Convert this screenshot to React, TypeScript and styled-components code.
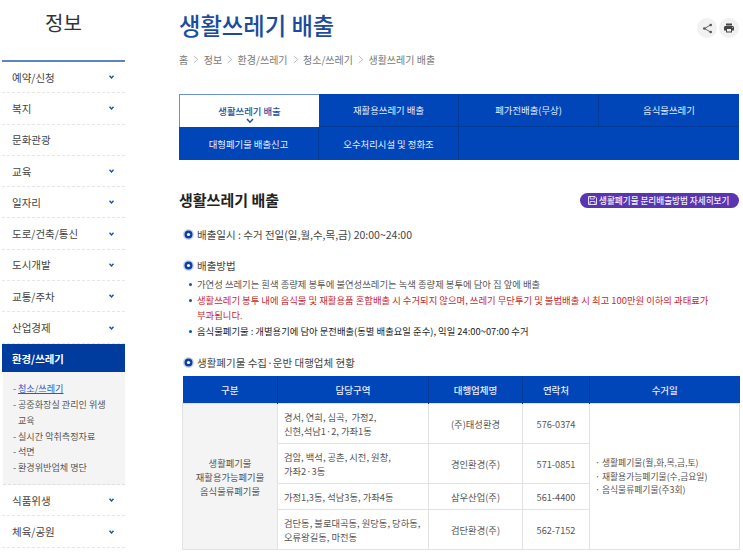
import React from "react";
import styled, { createGlobalStyle } from "styled-components";

const GlobalStyle = createGlobalStyle`
  html, body {
    margin: 0;
    padding: 0;
    height: 554px;
    overflow: hidden;
    background: #ffffff;
    font-family: "Noto Sans CJK KR", "Noto Sans", sans-serif;
    color: #444444;
  }
`;

const Page = styled.div`
  display: flex;
  align-items: flex-start;
  width: 743px;
  box-sizing: border-box;
  padding-left: 2px;
`;

const Sidebar = styled.aside`
  width: 123px;
  flex-shrink: 0;
  margin-right: 54px;
`;

const SideTitle = styled.h2`
  margin: 0;
  height: 62px;
  box-sizing: border-box;
  padding-top: 6px;
  font-size: 20px;
  line-height: 34px;
  font-weight: 400;
  text-align: center;
  color: #333333;
  border-bottom: 2px solid #5e82c4;
`;

const SideItem = styled.div`
  display: flex;
  align-items: center;
  justify-content: space-between;
  height: 31.3px;
  box-sizing: border-box;
  padding: 0 11px 0 10px;
  font-size: 10.5px;
  color: #444444;
  border-bottom: 1px dashed #e6e6e6;
`;

const SideActive = styled.div`
  display: flex;
  align-items: center;
  height: 28px;
  margin-top: 0.5px;
  padding: 0 10px;
  font-size: 10.4px;
  font-weight: 700;
  color: #ffffff;
  background: #003c9e;
`;

const SubPanel = styled.ul`
  list-style: none;
  margin: 0 0 0 1px;
  padding: 9px 17px 10px 10px;
  height: 113px;
  box-sizing: border-box;
  background: #f4f4f4;
  border-bottom: 1px dashed #e0e0e0;
`;

const SubItem = styled.li<{ $current?: boolean }>`
  position: relative;
  padding-left: 5px;
  font-size: 9.1px;
  line-height: 15.8px;
  color: ${(p) => (p.$current ? "#2a56c6" : "#555555")};
  text-decoration: ${(p) => (p.$current ? "underline" : "none")};
  &::before {
    content: "-";
    position: absolute;
    left: 0;
    color: #555555;
  }
`;

const Main = styled.main`
  width: 560px;
  flex-shrink: 0;
`;

const TopRow = styled.div`
  display: flex;
  align-items: flex-start;
  justify-content: space-between;
  height: 51px;
`;

const PageTitle = styled.h1`
  margin: 0;
  padding-top: 6px;
  font-size: 23.3px;
  line-height: 38px;
  font-weight: 500;
  color: #1b4c9c;
`;

const ToolGroup = styled.div`
  display: flex;
  gap: 2px;
  margin-top: 18px;
`;

const ToolButton = styled.span`
  display: flex;
  align-items: center;
  justify-content: center;
  width: 20px;
  height: 20px;
  border-radius: 50%;
  background: #f1f1f1;
`;

const Crumbs = styled.nav`
  display: flex;
  align-items: center;
  height: 16px;
  font-size: 10px;
  color: #777777;
`;

const CrumbSep = styled.svg`
  width: 15.5px;
  height: 9px;
  flex-shrink: 0;
`;

const Tabs = styled.div`
  display: grid;
  grid-template-columns: repeat(4, 140px);
  grid-auto-rows: 33px;
  margin-top: 27px;
  background: #0046b8;
`;

const Tab = styled.div<{ $active?: boolean; $row: number; $plain?: boolean }>`
  position: relative;
  display: flex;
  align-items: center;
  justify-content: center;
  box-sizing: border-box;
  font-size: 9.4px;
  color: ${(p) => (p.$active ? "#1d4f9e" : "#e8eefb")};
  font-weight: ${(p) => (p.$active ? 500 : 400)};
  background: ${(p) => (p.$active ? "#ffffff" : "#0046b8")};
  border: ${(p) => (p.$active ? "1px solid #6b8fd6" : "none")};
  border-bottom: ${(p) =>
    p.$active ? "none" : p.$row === 0 ? "1px solid #053a98" : "none"};
  border-right: ${(p) =>
    p.$active || p.$plain ? "none" : "1px solid #053a98"};
`;

const TabCaret = styled.svg`
  position: absolute;
  left: 66px;
  bottom: 3px;
  width: 8px;
  height: 6px;
`;

const SectionHead = styled.div`
  display: flex;
  align-items: center;
  justify-content: space-between;
  margin-top: 30px;
  height: 20px;
`;

const SectionTitle = styled.h3`
  margin: 0;
  font-size: 15px;
  line-height: 20px;
  font-weight: 700;
  color: #222222;
`;

const PurpleButton = styled.span`
  display: flex;
  align-items: center;
  gap: 2px;
  width: 159px;
  height: 15px;
  box-sizing: border-box;
  padding-left: 8px;
  border-radius: 8px;
  background: #5a35b0;
  font-size: 8.6px;
  font-weight: 500;
  color: #f2effa;
  white-space: nowrap;
`;

const Bullet = styled.div<{ $gap: number }>`
  display: flex;
  align-items: center;
  gap: 3px;
  height: 16px;
  margin-top: ${(p) => p.$gap}px;
  margin-left: 4px;
  font-size: 10.5px;
  color: #444444;
`;

const DotList = styled.ul`
  list-style: none;
  margin: 4px 0 0 0;
  padding: 0 20px 0 18px;
`;

const Dot = styled.li<{ $tone?: "red" | "dark" }>`
  position: relative;
  font-size: 9.35px;
  line-height: 15.5px;
  color: ${(p) =>
    p.$tone === "red" ? "#c8282e" : p.$tone === "dark" ? "#222222" : "#555555"};
  &::before {
    content: "";
    position: absolute;
    left: -8px;
    top: 6px;
    width: 3px;
    height: 3px;
    border-radius: 50%;
    background: #0f4fb5;
  }
`;

const Table = styled.table`
  width: 557px;
  margin: 6px 0 0 3px;
  border-collapse: collapse;
  table-layout: fixed;
  font-size: 9.3px;
  color: #555555;
`;

const Th = styled.th`
  height: 27px;
  padding: 0;
  background: #0046b8;
  color: #e8eefb;
  font-weight: 500;
  font-size: 9.5px;
  border-right: 1px solid #053a98;
  &:last-child {
    border-right: none;
  }
`;

const Td = styled.td<{ $left?: boolean; $shade?: boolean; $h?: number }>`
  height: ${(p) => p.$h ?? 40}px;
  padding: ${(p) => (p.$left ? "0 0 0 6px" : "0")};
  box-sizing: border-box;
  text-align: ${(p) => (p.$left ? "left" : "center")};
  line-height: 14px;
  white-space: nowrap;
  background: ${(p) => (p.$shade ? "#f4f4f4" : "#ffffff")};
  border: 1px solid #e2e2e2;
`;

const Tel = styled.span`
  font-size: 9.2px;
`;

const PickupList = styled.div`
  padding-left: 5px;
  text-align: left;
  font-size: 8.8px;
  line-height: 13.5px;
`;

const Chevron = () => (
  <svg width="5" height="4" viewBox="0 0 5 4">
    <path d="M0.5 0.7 L2.5 2.9 L4.5 0.7" fill="none" stroke="#1d4f9e" strokeWidth="1.4" />
  </svg>
);

const CircleMark = () => (
  <svg width="11" height="11" viewBox="0 0 11 11">
    <circle cx="5.5" cy="5.5" r="5.5" fill="#c9d6ee" />
    <circle cx="5.5" cy="5.5" r="4" fill="#0d3f9c" />
    <circle cx="5.5" cy="5.5" r="1.6" fill="#ffffff" />
  </svg>
);

const Sep = () => (
  <CrumbSep viewBox="0 0 15 9">
    <path d="M5.5 1 L9.5 4.5 L5.5 8" fill="none" stroke="#aaaaaa" strokeWidth="0.8" />
  </CrumbSep>
);

const sideTop = [
  { label: "예약/신청", more: true },
  { label: "복지", more: true },
  { label: "문화관광", more: false },
  { label: "교육", more: true },
  { label: "일자리", more: true },
  { label: "도로/건축/통신", more: true },
  { label: "도시개발", more: true },
  { label: "교통/주차", more: true },
  { label: "산업경제", more: true },
];

const crumbs = ["홈", "정보", "환경/쓰레기", "청소/쓰레기", "생활쓰레기 배출"];

const tabs = [
  "생활쓰레기 배출",
  "재활용쓰레기 배출",
  "폐가전배출(무상)",
  "음식물쓰레기",
  "대형폐기물 배출신고",
  "오수처리시설 및 정화조",
  "",
  "",
];

const App: React.FC = () => {
  return (
    <Page>
      <GlobalStyle />
      <Sidebar>
        <SideTitle>정보</SideTitle>
        {sideTop.map((item) => (
          <SideItem key={item.label}>
            {item.label}
            {item.more && <Chevron />}
          </SideItem>
        ))}
        <SideActive>환경/쓰레기</SideActive>
        <SubPanel>
          <SubItem $current>청소/쓰레기</SubItem>
          <SubItem>공중화장실 관리인 위생 교육</SubItem>
          <SubItem>실시간 악취측정자료</SubItem>
          <SubItem>석면</SubItem>
          <SubItem>환경위반업체 명단</SubItem>
        </SubPanel>
        <SideItem>
          식품위생
          <Chevron />
        </SideItem>
        <SideItem>
          체육/공원
          <Chevron />
        </SideItem>
      </Sidebar>
      <Main>
        <TopRow>
          <PageTitle>생활쓰레기 배출</PageTitle>
          <ToolGroup>
            <ToolButton>
              <svg width="11" height="11" viewBox="0 0 11 11">
                <path d="M8.5 2 L2.5 5.5 L8.5 9" fill="none" stroke="#555555" strokeWidth="0.9" />
                <circle cx="8.7" cy="2" r="1.3" fill="#555555" />
                <circle cx="2.3" cy="5.5" r="1.3" fill="#555555" />
                <circle cx="8.7" cy="9" r="1.3" fill="#555555" />
              </svg>
            </ToolButton>
            <ToolButton>
              <svg width="12" height="12" viewBox="0 0 24 24">
                <path
                  d="M19 8H5c-1.66 0-3 1.34-3 3v6h4v4h12v-4h4v-6c0-1.66-1.34-3-3-3zm-3 11H8v-5h8v5zm3-7c-.55 0-1-.45-1-1s.45-1 1-1 1 .45 1 1-.45 1-1 1zm-1-9H6v4h12V3z"
                  fill="#444444"
                />
              </svg>
            </ToolButton>
          </ToolGroup>
        </TopRow>
        <Crumbs>
          {crumbs.map((c, i) => (
            <React.Fragment key={c}>
              {i > 0 && <Sep />}
              {c}
            </React.Fragment>
          ))}
        </Crumbs>
        <Tabs>
          {tabs.map((t, i) => (
            <Tab
              key={i}
              $active={i === 0}
              $row={i < 4 ? 0 : 1}
              $plain={i === 3 || i >= 6}
            >
              {t}
              {i === 0 && (
                <TabCaret viewBox="0 0 8 6">
                  <path d="M1 1 L4 4.2 L7 1" fill="none" stroke="#1d4f9e" strokeWidth="1.5" />
                </TabCaret>
              )}
            </Tab>
          ))}
        </Tabs>
        <SectionHead>
          <SectionTitle>생활쓰레기 배출</SectionTitle>
          <PurpleButton>
            <svg width="9" height="9" viewBox="0 0 9 9">
              <path d="M0.5 0.5 H7 L8.5 2 V8.5 H0.5 Z" fill="none" stroke="#f2effa" strokeWidth="0.9" />
              <path d="M2.2 0.5 V3 H6.2 V0.5 M2 8.5 V5.5 H7 V8.5" fill="none" stroke="#f2effa" strokeWidth="0.8" />
            </svg>
            생활폐기물 분리배출방법 자세히보기
          </PurpleButton>
        </SectionHead>
        <Bullet $gap={16}>
          <CircleMark />
          배출일시 : 수거 전일(일,월,수,목,금) 20:00~24:00
        </Bullet>
        <Bullet $gap={15}>
          <CircleMark />
          배출방법
        </Bullet>
        <DotList>
          <Dot>가연성 쓰레기는 흰색 종량제 봉투에 불연성쓰레기는 녹색 종량제 봉투에 담아 집 앞에 배출</Dot>
          <Dot $tone="red">
            생활쓰레기 봉투 내에 음식물 및 재활용품 혼합배출 시 수거되지 않으며, 쓰레기 무단투기 및 불법배출 시 최고 100만원 이하의 과태료가 부과됩니다.
          </Dot>
          <Dot $tone="dark">음식물폐기물 : 개별용기에 담아 문전배출(동별 배출요일 준수), 익일 24:00~07:00 수거</Dot>
        </DotList>
        <Bullet $gap={15}>
          <CircleMark />
          생활폐기물 수집·운반 대행업체 현황
        </Bullet>
        <Table>
          <colgroup>
            <col style={{ width: 95 }} />
            <col style={{ width: 151 }} />
            <col style={{ width: 94 }} />
            <col style={{ width: 67 }} />
            <col style={{ width: 150 }} />
          </colgroup>
          <thead>
            <tr>
              <Th>구분</Th>
              <Th>담당구역</Th>
              <Th>대행업체명</Th>
              <Th>연락처</Th>
              <Th>수거일</Th>
            </tr>
          </thead>
          <tbody>
            <tr>
              <Td $shade rowSpan={4}>
                생활폐기물
                <br />
                재활용가능폐기물
                <br />
                음식물류폐기물
              </Td>
              <Td $left>
                경서, 연희, 심곡, &nbsp;가정2,
                <br />
                신현,석남1·2, 가좌1동
              </Td>
              <Td>(주)태성환경</Td>
              <Td>
                <Tel>576-0374</Tel>
              </Td>
              <Td rowSpan={4}>
                <PickupList>
                  · 생활폐기물(월,화,목,금,토)
                  <br />· 재활용가능폐기물(수,금요일)
                  <br />· 음식물류폐기물(주3회)
                </PickupList>
              </Td>
            </tr>
            <tr>
              <Td $left>
                검암, 백석, 공촌, 시전, 원창,
                <br />
                가좌2·3동
              </Td>
              <Td>경인환경(주)</Td>
              <Td>
                <Tel>571-0851</Tel>
              </Td>
            </tr>
            <tr>
              <Td $left $h={26}>
                가정1,3동, 석남3동, 가좌4동
              </Td>
              <Td $h={26}>삼우산업(주)</Td>
              <Td $h={26}>
                <Tel>561-4400</Tel>
              </Td>
            </tr>
            <tr>
              <Td $left>
                검단동, 불로대곡동, 원당동, 당하동,
                <br />
                오류왕길동, 마전동
              </Td>
              <Td>검단환경(주)</Td>
              <Td>
                <Tel>562-7152</Tel>
              </Td>
            </tr>
          </tbody>
        </Table>
      </Main>
    </Page>
  );
};

export default App;
